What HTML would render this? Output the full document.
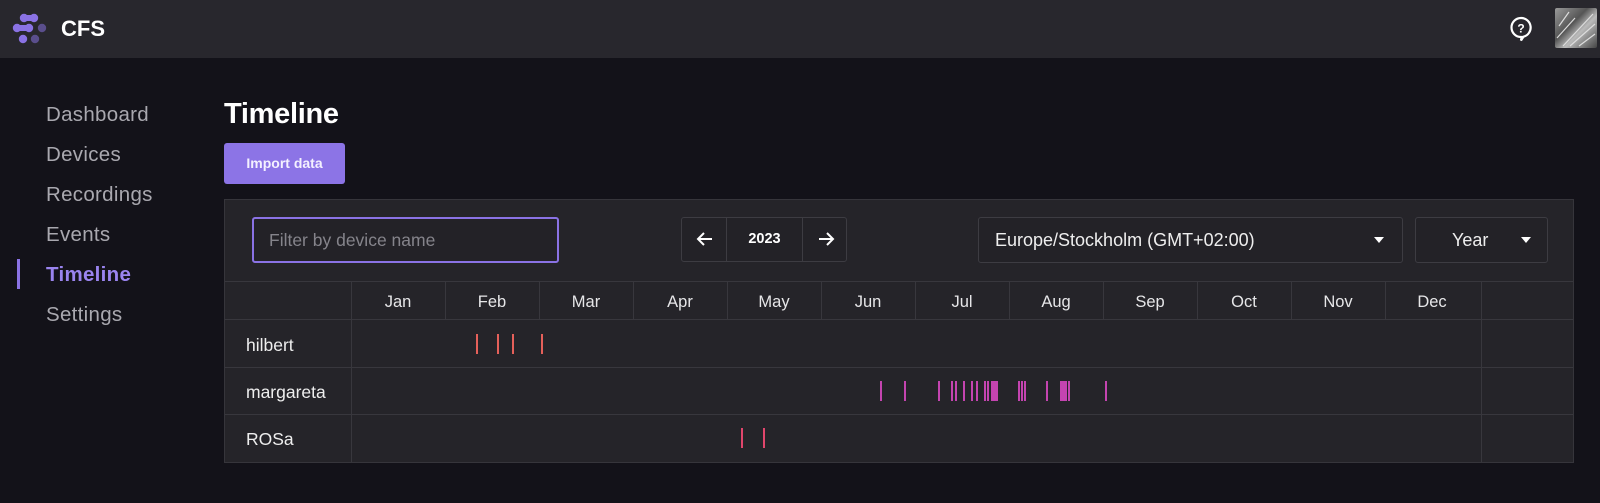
<!DOCTYPE html>
<html><head><meta charset="utf-8">
<style>
*{box-sizing:border-box;margin:0;padding:0}
body{width:1600px;height:503px;background:#131219;font-family:"Liberation Sans",sans-serif;position:relative;overflow:hidden;color:#fff}
.hdr{position:absolute;left:0;top:0;width:1600px;height:58px;background:#28272d}
.abs{position:absolute}
.nav{position:absolute;left:46px;font-size:20.5px;color:#a9a8af;line-height:22px;letter-spacing:0.3px}
.panel{position:absolute;left:224px;top:199px;width:1350px;height:264px;background:#252429;border:1px solid #36353b}
.box{position:absolute;border:1px solid #3d3c42;border-radius:3px;background:#232227}
.vl{position:absolute;width:1px;background:#38373d}
.hl{position:absolute;height:1px;background:#38373d}
.mon{position:absolute;top:293px;font-size:16.5px;color:#e6e6e8;text-align:center;width:94px}
.dev{position:absolute;left:246px;font-size:17.5px;color:#eee}
.b{position:absolute;width:2px}
.h{background:#e5605a;top:334px;height:20px}
.m{background:#c444b0;top:381px;height:20px}
.r{background:#e1466c;top:428px;height:20px}
</style></head><body>
<div class="hdr"></div>
<svg class="abs" style="left:0;top:0" width="60" height="50">
<g fill="#8a72e4"><circle cx="24" cy="18" r="4.2"/><circle cx="34" cy="18" r="4.2"/><rect x="24" y="15" width="10" height="6"/>
<circle cx="17" cy="28" r="4.2"/><circle cx="29" cy="28" r="4.2"/><rect x="17" y="25" width="12" height="6"/>
<circle cx="23" cy="39" r="4.2"/></g>
<g fill="#5a4e8c"><circle cx="42" cy="28" r="4.2"/><circle cx="35" cy="39" r="4.2"/></g>
</svg>
<div class="abs" style="left:61px;top:16px;font-size:22px;font-weight:bold">CFS</div>
<svg class="abs" style="left:1509px;top:16px" width="24" height="26" viewBox="0 0 24 26"><path d="M12 2a9.5 9.5 0 1 0 0 19h0.5l-0.5 3.5 2.5-3.8A9.5 9.5 0 0 0 12 2z" fill="none" stroke="#fff" stroke-width="2.2"/><text x="12" y="16.5" font-size="12" font-weight="bold" text-anchor="middle" fill="#fff" font-family="Liberation Sans">?</text></svg>
<div class="abs" style="left:1555px;top:8px;width:42px;height:40px;background:linear-gradient(135deg,#9a9a9a,#555 40%,#bbb 60%,#444);border-radius:2px"></div>
<svg class="abs" style="left:1555px;top:8px" width="42" height="40"><path d="M2 30L20 10M8 38L38 6M15 38L40 16M4 18L14 4M24 38L40 26" stroke="#ddd" stroke-width="1.2" fill="none"/></svg>

<div class="nav" style="top:104px">Dashboard</div>
<div class="nav" style="top:144px">Devices</div>
<div class="nav" style="top:184px">Recordings</div>
<div class="nav" style="top:224px">Events</div>
<div class="abs" style="left:17px;top:259px;width:3px;height:30px;background:#8a72e4"></div>
<div class="nav" style="top:264px;color:#9a84ef;font-weight:bold">Timeline</div>
<div class="nav" style="top:304px">Settings</div>

<div class="abs" style="left:224px;top:98px;font-size:29px;font-weight:bold;letter-spacing:-0.3px">Timeline</div>
<div class="abs" style="left:224px;top:143px;width:121px;height:41px;background:#8c74e6;border-radius:3px;font-size:14px;font-weight:bold;color:#f4f1ff;text-align:center;line-height:41px">Import data</div>

<div class="panel"></div>
<div class="abs" style="left:252px;top:217px;width:307px;height:46px;border:2px solid #8a72e4;border-radius:3px;background:#232227;font-size:17.5px;color:#85848b;padding-left:15px;line-height:42px">Filter by device name</div>

<div class="box" style="left:681px;top:217px;width:166px;height:45px"></div>
<div class="vl" style="left:726px;top:218px;height:43px;background:#3d3c42"></div>
<div class="vl" style="left:802px;top:218px;height:43px;background:#3d3c42"></div>
<svg class="abs" style="left:695px;top:229px" width="20" height="20" viewBox="0 0 20 20"><path d="M17 10H3M9 4L3 10l6 6" stroke="#fff" stroke-width="2" fill="none"/></svg>
<svg class="abs" style="left:816px;top:229px" width="20" height="20" viewBox="0 0 20 20"><path d="M3 10h14M11 4l6 6-6 6" stroke="#fff" stroke-width="2" fill="none"/></svg>
<div class="abs" style="left:727px;top:231px;width:75px;text-align:center;font-size:14.5px;font-weight:bold">2023</div>

<div class="box" style="left:978px;top:217px;width:425px;height:46px;font-size:18px;color:#eee;padding-left:16px;line-height:44px">Europe/Stockholm (GMT+02:00)</div>
<svg class="abs" style="left:1373px;top:236px" width="12" height="8"><path d="M1 1h10L6 7z" fill="#fff"/></svg>
<div class="box" style="left:1415px;top:217px;width:133px;height:46px;font-size:18px;color:#eee;padding-left:36px;line-height:44px">Year</div>
<svg class="abs" style="left:1520px;top:236px" width="12" height="8"><path d="M1 1h10L6 7z" fill="#fff"/></svg>

<div class="hl" style="left:225px;top:281px;width:1348px"></div>
<div class="hl" style="left:225px;top:319px;width:1348px"></div>
<div class="hl" style="left:225px;top:367px;width:1348px"></div>
<div class="hl" style="left:225px;top:414px;width:1348px"></div>
<div class="vl" style="left:351px;top:281px;height:181px"></div>
<div class="vl" style="left:1481px;top:281px;height:181px"></div>
<div class="vl" style="left:445px;top:281px;height:38px"></div>
<div class="vl" style="left:539px;top:281px;height:38px"></div>
<div class="vl" style="left:633px;top:281px;height:38px"></div>
<div class="vl" style="left:727px;top:281px;height:38px"></div>
<div class="vl" style="left:821px;top:281px;height:38px"></div>
<div class="vl" style="left:915px;top:281px;height:38px"></div>
<div class="vl" style="left:1009px;top:281px;height:38px"></div>
<div class="vl" style="left:1103px;top:281px;height:38px"></div>
<div class="vl" style="left:1197px;top:281px;height:38px"></div>
<div class="vl" style="left:1291px;top:281px;height:38px"></div>
<div class="vl" style="left:1385px;top:281px;height:38px"></div>

<div class="mon" style="left:351px">Jan</div>
<div class="mon" style="left:445px">Feb</div>
<div class="mon" style="left:539px">Mar</div>
<div class="mon" style="left:633px">Apr</div>
<div class="mon" style="left:727px">May</div>
<div class="mon" style="left:821px">Jun</div>
<div class="mon" style="left:915px">Jul</div>
<div class="mon" style="left:1009px">Aug</div>
<div class="mon" style="left:1103px">Sep</div>
<div class="mon" style="left:1197px">Oct</div>
<div class="mon" style="left:1291px">Nov</div>
<div class="mon" style="left:1385px">Dec</div>

<div class="dev" style="top:335px">hilbert</div>
<div class="dev" style="top:382px">margareta</div>
<div class="dev" style="top:429px">ROSa</div>

<div class="b h" style="left:476px"></div><div class="b h" style="left:497px"></div><div class="b h" style="left:512px"></div><div class="b h" style="left:541px"></div>

<div class="b m" style="left:880px"></div><div class="b m" style="left:904px"></div><div class="b m" style="left:938px"></div>
<div class="b m" style="left:951px"></div><div class="b m" style="left:955px"></div><div class="b m" style="left:963px"></div>
<div class="b m" style="left:971px"></div><div class="b m" style="left:976px"></div><div class="b m" style="left:984px"></div>
<div class="b m" style="left:987px"></div><div class="b m" style="left:991px;width:7px"></div>
<div class="b m" style="left:1018px"></div><div class="b m" style="left:1021px"></div><div class="b m" style="left:1024px"></div>
<div class="b m" style="left:1046px"></div><div class="b m" style="left:1060px;width:7px"></div><div class="b m" style="left:1068px"></div>
<div class="b m" style="left:1105px"></div>

<div class="b r" style="left:741px"></div><div class="b r" style="left:763px"></div>
</body></html>
